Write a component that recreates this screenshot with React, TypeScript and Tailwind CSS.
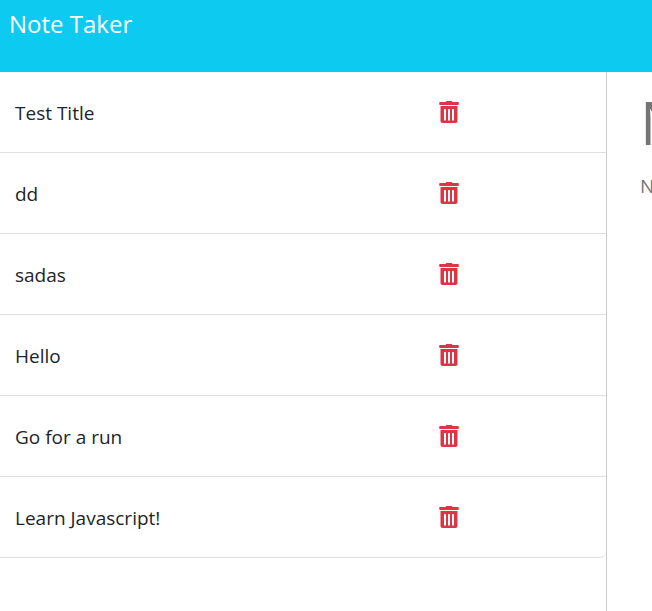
const notes = ["Test Title", "dd", "sadas", "Hello", "Go for a run", "Learn Javascript!"];

function TrashIcon() {
  return (
    <svg viewBox="0 0 20 22" className="h-[22px] w-5" fill="currentColor" aria-hidden="true">
      <path d="M1 1h5.500l.8-1h5.400l.8 1H19q.8 0 .8.700v1.500q0 .7-.8.7H1q-.8 0-.8-.7V1.700Q.2 1 1 1z" />
      <path
        fillRule="evenodd"
        d="M1.500 5h17v15.300q0 1.700-2 1.700h-13q-2 0-2-1.700zM5.500 8q-.5 0-.5.5v10.500q0 .5.5.5h1q.5 0 .5-.5V8.500q0-.5-.5-.5zM9.500 8q-.5 0-.5.5v10.500q0 .5.5.5h1q.5 0 .5-.5V8.500q0-.5-.5-.5zM13.500 8q-.5 0-.5.5v10.500q0 .5.5.5h1q.5 0 .5-.5V8.500q0-.5-.5-.5z"
      />
    </svg>
  );
}

export default function App() {
  return (
    <div className="flex min-h-screen flex-col overflow-hidden bg-white font-['Segoe_UI','Open_Sans',sans-serif] text-[#212529]">
      <nav className="h-[72px] bg-[#0dcaf0] px-[9px] pt-1">
        <a href="#" className="text-2xl leading-10 text-white">
          Note Taker
        </a>
      </nav>
      <div className="flex flex-1">
        <aside className="w-1/3 min-w-[607px] shrink-0 border-r border-[#ccc]">
          <ul className="overflow-hidden rounded-br-md border-b border-[#dfdfdf]">
            {notes.map((note) => (
              <li
                key={note}
                className="flex h-[81px] items-center border-b border-[#dfdfdf] pr-[147px] pl-[15px] last:h-20 last:border-b-0"
              >
                <span className="flex-1 pt-0.5 text-[19px] leading-7">{note}</span>
                <button type="button" aria-label={`Delete ${note}`} className="text-[#dc3545]">
                  <TrashIcon />
                </button>
              </li>
            ))}
          </ul>
        </aside>
        <main className="flex min-w-0 flex-1 flex-col overflow-hidden pt-2.5 pl-[33px]">
          <input
            type="text"
            aria-label="Note title"
            placeholder="Note Title"
            className="h-20 w-[600px] text-[60px] outline-none placeholder:text-[#757575]"
          />
          <textarea
            aria-label="Note text"
            placeholder="Note Text"
            className="mt-2.5 h-80 w-[600px] resize-none text-[19px] leading-7 outline-none placeholder:text-[#757575]"
          />
        </main>
      </div>
    </div>
  );
}
